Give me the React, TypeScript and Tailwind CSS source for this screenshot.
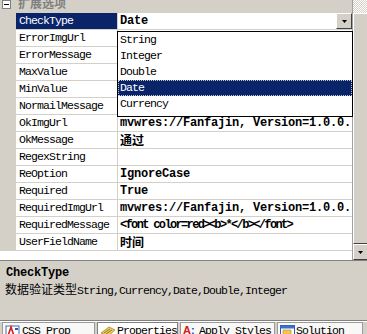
import React from "react";

type Row = { name: string; value?: string; kind?: "cjk" | "tight" | "normal"; selected?: boolean };

const rows: Row[] = [
  { name: "CheckType", value: "Date", selected: true },
  { name: "ErrorImgUrl" },
  { name: "ErrorMessage" },
  { name: "MaxValue" },
  { name: "MinValue" },
  { name: "NormailMessage" },
  { name: "OkImgUrl", value: "mvwres://Fanfajin, Version=1.0.0." },
  { name: "OkMessage", value: "通过", kind: "cjk" },
  { name: "RegexString" },
  { name: "ReOption", value: "IgnoreCase" },
  { name: "Required", value: "True" },
  { name: "RequiredImgUrl", value: "mvwres://Fanfajin, Version=1.0.0." },
  { name: "RequiredMessage", value: "<font color=red><b>*</b></font>", kind: "tight" },
  { name: "UserFieldName", value: "时间", kind: "cjk" },
];

const items = ["String", "Integer", "Double", "Date", "Currency"];

function DropButton() {
  return (
    <div className="w-[16px] h-[16px] shrink-0 bg-[#d4d0c8] border border-t-[#ffffff] border-l-[#ffffff] border-r-[#404040] border-b-[#404040] flex items-center justify-center">
      <svg width="5" height="3" viewBox="0 0 5 3">
        <polygon points="0,0 5,0 2.5,3" fill="#000" />
      </svg>
    </div>
  );
}

function Value({ row }: { row: Row }) {
  if (!row.value) return null;
  if (row.kind === "cjk")
    return (
      <div className="h-[16px] font-['Noto_Sans_CJK_SC',sans-serif] font-bold text-[12px] leading-[16px] tracking-normal">
        {row.value}
      </div>
    );
  if (row.kind === "tight")
    return <div className="h-[16px] font-bold text-[12px] leading-[16px] tracking-[-1.65px]">{row.value}</div>;
  return <div className="h-[16px] font-bold text-[12px] leading-[16px] tracking-[-0.2px]">{row.value}</div>;
}

function GridRow({ row }: { row: Row }) {
  return (
    <div className="flex h-[17px] shrink-0">
      <div className="w-[16px] h-full bg-[#d4d0c8] shrink-0" />
      <div className="flex flex-1 border-b border-[#d4d0c8] min-w-0">
        <div
          className={
            row.selected
              ? "w-[102px] h-[16px] shrink-0 border-r border-[#d4d0c8] bg-[#0a246a] text-white pl-[3px] text-[11.5px] leading-[16px] tracking-[-0.9px] whitespace-nowrap overflow-hidden"
              : "w-[102px] h-[16px] shrink-0 border-r border-[#d4d0c8] bg-white text-black pl-[3px] text-[11.5px] leading-[16px] tracking-[-0.9px] whitespace-nowrap overflow-hidden"
          }
        >
          {row.name}
        </div>
        <div className="flex-1 h-[16px] flex items-start pl-[2px] whitespace-nowrap overflow-hidden min-w-0">
          <div className="flex-1 h-[16px] overflow-hidden">
            <Value row={row} />
          </div>
          {row.selected && <DropButton />}
        </div>
      </div>
    </div>
  );
}

function Scrollbar() {
  return (
    <div className="w-[15px] flex flex-col shrink-0 border-l border-[#a0a0a0]">
      <div className="h-[13px] shrink-0 bg-[repeating-conic-gradient(#ffffff_0%_25%,#d4d0c8_0%_50%)] bg-[length:2px_2px]" />
      <div className="flex-1 bg-[#d4d0c8] border-t border-l border-t-[#ffffff] border-l-[#ffffff] border-b border-b-[#404040]" />
      <div className="h-[16px] shrink-0 bg-[#d4d0c8] border-t border-l border-t-[#ffffff] border-l-[#ffffff] border-b border-b-[#404040] flex items-center justify-center">
        <svg width="5" height="3" viewBox="0 0 5 3">
          <polygon points="0,0 5,0 2.5,3" fill="#000" />
        </svg>
      </div>
    </div>
  );
}

function Tab({
  w,
  children,
  label,
  selected,
}: {
  w: string;
  children: React.ReactNode;
  label: string;
  selected?: boolean;
}) {
  return (
    <div
      className={
        selected
          ? `${w} h-[13px] shrink-0 border-l border-t border-r border-[#808080] bg-[#ffffff] flex items-start pl-[2px] pt-[1px] gap-[1px] overflow-hidden`
          : `${w} h-[13px] shrink-0 border-l border-t border-r border-[#9a9a9a] bg-[#f8f8f6] flex items-start pl-[2px] pt-[1px] gap-[1px] overflow-hidden`
      }
    >
      {children}
      <span className="text-[11.5px] leading-[14px] tracking-[-0.9px] whitespace-nowrap text-black">{label}</span>
    </div>
  );
}

export default function App() {
  return (
    <div className="w-[367px] h-[334px] overflow-hidden bg-[#d4d0c8] flex flex-col font-['Liberation_Mono','Noto_Sans_CJK_SC',monospace] text-black">
      <div className="h-[260px] flex shrink-0">
        <div className="w-[352px] relative flex flex-col bg-white">
          <div className="h-[13px] bg-[#d4d0c8] flex items-start overflow-hidden shrink-0">
            <div className="ml-[2px] w-[9px] h-[9px] border border-[#808080] bg-white flex items-center justify-center shrink-0">
              <div className="w-[5px] h-px bg-black" />
            </div>
            <div className="ml-[7px] -mt-[3px] text-[12px] leading-[12px] font-bold text-[#808080] font-['Noto_Sans_CJK_SC',sans-serif]">
              扩展选项
            </div>
          </div>
          {rows.map((r) => (
            <GridRow key={r.name} row={r} />
          ))}
          <div className="flex-1 bg-white" />

          <div className="absolute left-[117px] top-[31px] w-[236px] h-[86px] border border-black bg-white flex flex-col">
            {items.map((it) =>
              it === "Date" ? (
                <div
                  key={it}
                  className="h-[16px] shrink-0 bg-[#0a246a] text-white border border-dotted border-[#c8c8c8] pl-[1px] text-[11.5px] leading-[14px] tracking-[-0.9px]"
                >
                  {it}
                </div>
              ) : (
                <div key={it} className="h-[16px] shrink-0 pl-[2px] text-[11.5px] leading-[16px] tracking-[-0.9px]">
                  {it}
                </div>
              )
            )}
          </div>
        </div>
        <Scrollbar />
      </div>

      <div className="h-px bg-[#808080] shrink-0" />
      <div className="h-[59px] shrink-0 bg-[#d4d0c8] px-[5px] pt-[5px]">
        <div className="font-bold text-[12px] leading-[15px] tracking-[-0.2px] pl-[1px]">CheckType</div>
        <div className="text-[11.5px] leading-[15px] tracking-[-0.9px] whitespace-nowrap">
          <span className="font-['Noto_Sans_CJK_SC',sans-serif] text-[12px] tracking-normal">数据验证类型</span>
          String,Currency,Date,Double,Integer
        </div>
      </div>
      <div className="h-px bg-[#808080] shrink-0" />
      <div className="flex-1 bg-[#d4d0c8] border-t border-white flex items-start pl-[2px] gap-[2px]">
        <Tab w="w-[93px]" label="CSS Prop">
          <svg width="16" height="13" viewBox="0 0 16 13" className="shrink-0">
            <rect x="1" y="2" width="13" height="11" fill="#ffffff" stroke="#4a6ab0" />
            <polygon points="3,12 6,3 9,12" fill="none" stroke="#d02020" strokeWidth="1.6" />
            <rect x="10" y="4" width="3" height="2" fill="#3050c0" />
          </svg>
        </Tab>
        <Tab w="w-[81px]" label="Properties" selected>
          <svg width="16" height="13" viewBox="0 0 16 13" className="shrink-0">
            <polygon points="1,9 9,3 15,6 8,12" fill="#f0d060" stroke="#a08020" strokeWidth="0.8" />
            <line x1="4" y1="9" x2="10" y2="5" stroke="#806010" strokeWidth="0.8" />
            <line x1="6" y1="10" x2="12" y2="6" stroke="#806010" strokeWidth="0.8" />
          </svg>
        </Tab>
        <Tab w="w-[95px]" label="Apply Styles">
          <span className="w-[15px] shrink-0 text-[11px] leading-[12px] font-bold text-[#d02020] font-['Liberation_Sans',sans-serif]">
            A<span className="text-[#2040c0]">:</span>
          </span>
        </Tab>
        <Tab w="w-[86px]" label="Solution">
          <svg width="15" height="13" viewBox="0 0 15 13" className="shrink-0">
            <rect x="0.5" y="1.5" width="14" height="11" fill="#ffffff" stroke="#2a5ab8" />
            <rect x="0.5" y="1.5" width="14" height="3" fill="#3a6fd0" />
            <rect x="3" y="6" width="8" height="5" fill="#f0c850" stroke="#b08820" strokeWidth="0.6" />
          </svg>
        </Tab>
      </div>
    </div>
  );
}
